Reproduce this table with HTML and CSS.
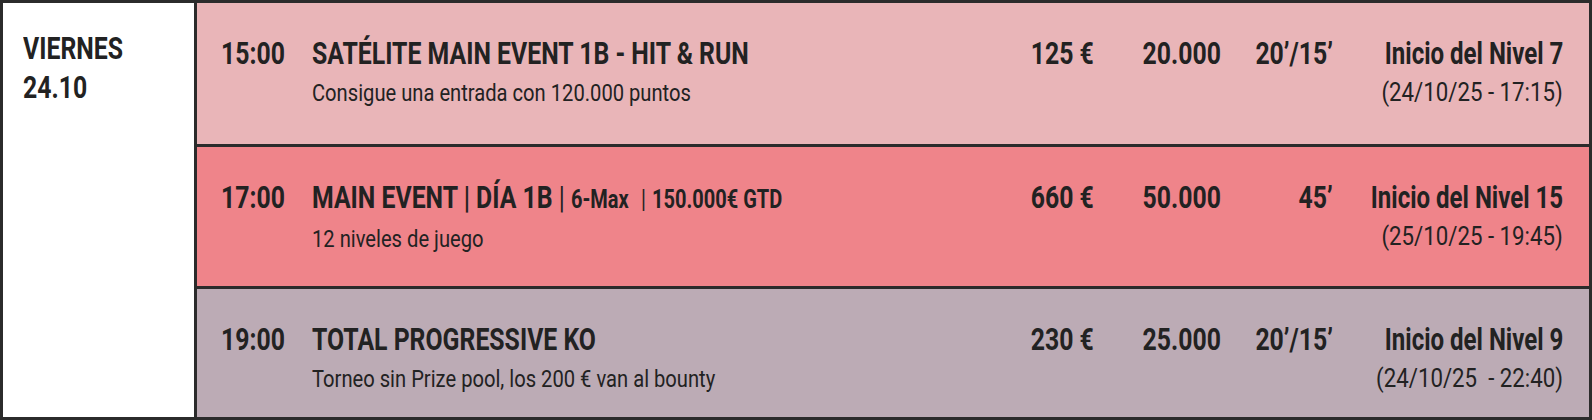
FILE: index.html
```html
<!DOCTYPE html>
<html lang="es">
<head>
<meta charset="utf-8">
<title>Calendario</title>
<link rel="stylesheet" href="styles.css">
</head>
<body>
<div class="sched">
  <div class="day">
    <span class="cx">VIERNES</span><br>
    <span class="cx">24.10</span>
  </div>
  <div class="events">
    <div class="ev ev-sat">
      <div class="c time"><span class="cx">15:00</span></div>
      <div class="c name">
        <div class="l1"><span class="cx">SATÉLITE MAIN EVENT 1B - HIT &amp; RUN</span></div>
        <div class="l2"><span class="cx">Consigue una entrada con 120.000 puntos</span></div>
      </div>
      <div class="c num"><span class="cx r">125 €</span></div>
      <div class="c num"><span class="cx r">20.000</span></div>
      <div class="c num"><span class="cx r">20’/15’</span></div>
      <div class="c info">
        <div class="l1"><span class="cx r">Inicio del Nivel 7</span></div>
        <div class="l2"><span class="cx r">(24/10/25 - 17:15)</span></div>
      </div>
    </div>
    <div class="ev ev-main">
      <div class="c time"><span class="cx">17:00</span></div>
      <div class="c name">
        <div class="l1"><span class="cx">MAIN EVENT | DÍA 1B <span class="pipe">|</span> <span class="sm">6-Max</span> &nbsp;<span class="pipe sm">|</span> <span class="sm">150.000€ GTD</span></span></div>
        <div class="l2"><span class="cx">12 niveles de juego</span></div>
      </div>
      <div class="c num"><span class="cx r">660 €</span></div>
      <div class="c num"><span class="cx r">50.000</span></div>
      <div class="c num"><span class="cx r">45’</span></div>
      <div class="c info">
        <div class="l1"><span class="cx r">Inicio del Nivel 15</span></div>
        <div class="l2"><span class="cx r">(25/10/25 - 19:45)</span></div>
      </div>
    </div>
    <div class="ev ev-pko">
      <div class="c time"><span class="cx">19:00</span></div>
      <div class="c name">
        <div class="l1"><span class="cx">TOTAL PROGRESSIVE KO</span></div>
        <div class="l2"><span class="cx">Torneo sin Prize pool, los 200 € van al bounty</span></div>
      </div>
      <div class="c num"><span class="cx r">230 €</span></div>
      <div class="c num"><span class="cx r">25.000</span></div>
      <div class="c num"><span class="cx r">20’/15’</span></div>
      <div class="c info">
        <div class="l1"><span class="cx r">Inicio del Nivel 9</span></div>
        <div class="l2"><span class="cx r">(24/10/25 &nbsp;- 22:40)</span></div>
      </div>
    </div>
  </div>
</div>
</body>
</html>
```

FILE: styles.css
```css
* { box-sizing: border-box; }
html, body { margin: 0; padding: 0; background: #ffffff; }
body {
  font-family: Roboto, "Liberation Sans", sans-serif;
  color: #222222;
}
.sched {
  display: flex;
  width: 1592px;
  height: 420px;
  border: 3px solid #2b2b2b;
}
.cx {
  display: inline-block;
  white-space: nowrap;
  transform: scaleX(0.8);
  transform-origin: left center;
}
.cx.r { transform-origin: right center; }
.day {
  width: 194px;
  flex: none;
  background: #ffffff;
  border-right: 3px solid #2b2b2b;
  padding: 26px 0 0 20px;
  font-weight: 700;
  font-size: 31px;
  line-height: 39px;
}
.events {
  flex: 1;
  display: flex;
  flex-direction: column;
}
.ev {
  display: grid;
  grid-template-columns: 91px 1fr 110px 127px 112px 230px;
  align-items: start;
  padding: 33px 26px 0 24px;
  height: 141px;
  flex: none;
}
.ev + .ev { border-top: 3px solid #2b2b2b; height: 142px; }
.ev:last-child { flex: 1; height: auto; }
.ev-sat { background: #e9b5b8; }
.ev-main { background: #ef848a; }
.ev-pko { background: #bcabb5; }
.c { min-width: 0; }
.l1, .time, .num {
  font-weight: 700;
  font-size: 31px;
  line-height: 36px;
  white-space: nowrap;
}
.l2 {
  font-size: 24px;
  line-height: 42px;
  white-space: nowrap;
}
.l2 .cx { transform: scaleX(0.84); }
.num { display: flex; justify-content: flex-end; }
.info .l1, .info .l2 { display: flex; justify-content: flex-end; }
.info .l1 .cx { transform: scaleX(0.775); }
.info .l2 { font-size: 25px; }
.info .l2 .cx { transform: scaleX(0.89); }
.pipe { font-weight: 400; }
.sm { font-size: 25px; }
```
